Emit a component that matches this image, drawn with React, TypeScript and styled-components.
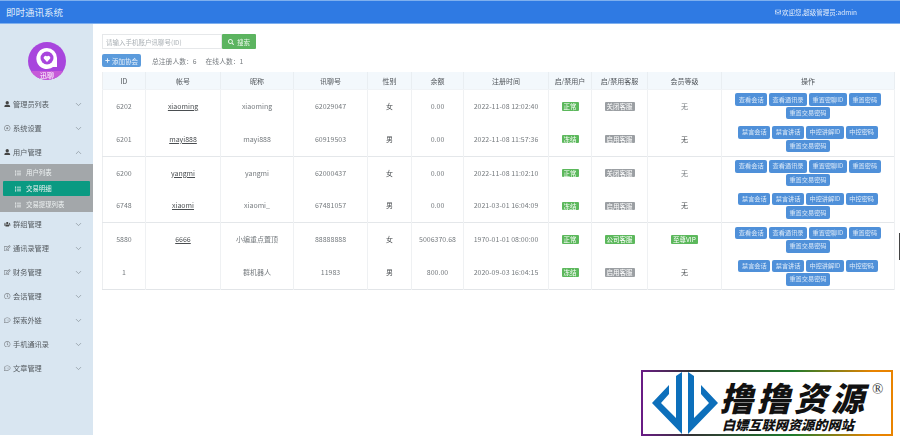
import React from "react";
import styled, { createGlobalStyle } from "styled-components";
import { ChevronDown, ChevronUp } from "lucide-react";
import { FaUser, FaUsers, FaRegEdit, FaRegClock, FaRegCommentDots, FaRegDotCircle, FaList, FaSearch, FaPlus, FaRegEnvelope } from "react-icons/fa";

const Global = createGlobalStyle`
  html, body { margin: 0; padding: 0; background: #fff; overflow: hidden; }
  body { font-family: "Noto Sans CJK SC", "Liberation Sans", sans-serif; }
`;
const Page = styled.div`
  width: 900px; height: 436px; display: flex; flex-direction: column;
  filter: blur(0.5px);
`;
const Header = styled.header`
  height: 24px; flex: none; box-sizing: border-box; background: #2f7ae3;
  border-top: 1px solid #7fb0ee; border-bottom: 1px solid #7fb0ee;
  display: flex; align-items: center; justify-content: space-between;
  padding: 0 43px 1px 6px; color: #dfeafa;
`;
const Brand = styled.div` font-size: 9.5px; `;
const Welcome = styled.div` font-size: 6.5px; display: flex; align-items: center; gap: 1px; `;
const Body = styled.div` flex: 1; display: flex; min-height: 0; `;
const Side = styled.aside`
  width: 93px; flex: none; height: 411px; background: #d9e6f1; display: flex; flex-direction: column;
`;
const LogoWrap = styled.div` height: 68px; flex: none; display: flex; justify-content: center; padding-top: 18px; box-sizing: border-box; `;
const MenuItem = styled.div<{ $dark?: boolean }>`
  height: 24px; display: flex; align-items: center; padding: 0 10px 0 4px; font-size: 7.2px; color: #555b60; gap: 2.5px;
  svg.ico { width: 6.5px; height: 6.5px; flex: none; color: ${(p) => (p.$dark ? "#444" : "#80868c")}; }
  svg.chev { width: 9px; height: 9px; margin-left: auto; color: #8c979f; }
`;
const SubMenu = styled.div` background: #a3a7aa; height: 48px; flex: none; display: flex; flex-direction: column; padding-top: 1px; box-sizing: border-box; `;
const SubItem = styled.div<{ $active?: boolean }>`
  height: 15px; margin: ${(p) => (p.$active ? "1px 3px" : "0 3px")}; flex: none; display: flex; align-items: center; gap: 5px; padding-left: 12px;
  font-size: 6.4px; color: #eef2f2; border-radius: 1px;
  background: ${(p) => (p.$active ? "#0a9a82" : "transparent")};
  svg { width: 6px; height: 6px; }
`;
const Main = styled.main` flex: 1; padding: 10px 6px 0 9px; min-width: 0; `;
const SearchRow = styled.div` display: flex; height: 15px; `;
const SearchInput = styled.div`
  width: 120px; box-sizing: border-box; border: 1px solid #e6e8ea; font-size: 6.5px; color: #aab0b5; display: flex; align-items: center; padding-left: 3px;
`;
const SearchBtn = styled.div`
  width: 34px; background: #5cb460; color: #eaf7ea; font-size: 6.5px; display: flex; align-items: center; justify-content: center; gap: 3px; border-radius: 1px;
  svg { width: 6px; height: 6px; }
`;
const StatRow = styled.div` display: flex; align-items: center; height: 13px; margin-top: 5px; font-size: 6.8px; color: #777c80; `;
const AddBtn = styled.div`
  width: 39px; height: 13px; background: #5b9bdc; color: #e6f0fb; font-size: 6.5px; display: flex; align-items: center; justify-content: center; gap: 2px; border-radius: 2px; margin-right: 11px;
  svg { width: 5px; height: 5px; }
`;
const Stat = styled.span` margin-right: 9px; `;
const Table = styled.table`
  margin-top: 5px; width: 792px; border-collapse: collapse; table-layout: fixed; font-size: 7px; color: #767b7f;
  border-bottom: 1px solid #e2e5e8; border-left: 1px solid #eceef0; border-right: 1px solid #eceef0;
`;
const Th = styled.th`
  height: 17px; padding: 0; background: #f3f8fc; color: #50555a; font-weight: 400; font-size: 7px; border-right: 1px solid #e9eef2; border-bottom: 1px solid #f0f3f6;
`;
const Tr = styled.tr<{ $sep?: boolean }>`
  height: 33.33px;
  border-bottom: ${(p) => (p.$sep ? "1px solid #e4e7ea" : "none")};
`;
const Td = styled.td<{ $link?: boolean; $dark?: boolean }>`
  padding: 0; text-align: center; border-right: 1px solid #eff1f3; line-height: 1;
  text-decoration: ${(p) => (p.$link ? "underline" : "none")};
  color: ${(p) => (p.$dark ? "#4a4e51" : "inherit")};
`;
const Tag = styled.span<{ $green?: boolean }>`
  display: inline-block; padding: 1px 2px; font-size: 6.5px; line-height: 6.5px; border-radius: 1px; color: #fff; white-space: nowrap;
  background: ${(p) => (p.$green ? "#5cb85c" : "#9b9fa3")};
`;
const Ops = styled.div` display: flex; flex-wrap: wrap; justify-content: center; gap: 1px 2px; padding: 0 3px; `;
const OpBtn = styled.span`
  height: 12.5px; background: #4f90d9; color: #dce9f8; font-size: 6.2px; border-radius: 2px; padding: 0 3.5px; display: flex; align-items: center; white-space: nowrap;
`;
const Edge = styled.div` position: absolute; left: 899px; top: 233px; width: 1px; height: 27px; background: #444; `;
const Mark = styled.div`
  position: absolute; left: 641px; top: 370px; width: 252px; height: 66px; box-sizing: border-box; padding: 2px;
  background: linear-gradient(90deg, #6a1b86 0%, #333 20%, #1c7a2c 60%, #e98300 92%);
  z-index: 2;
`;
const MarkInner = styled.div` background: #fff; height: 100%; display: flex; position: relative; align-items: center; padding-left: 9px; `;
const MarkText = styled.div` margin-left: 2px; align-self: flex-start; padding-top: 9px; display: flex; flex-direction: column; align-items: flex-start; font-family: "Noto Sans CJK SC", sans-serif; font-style: italic; font-weight: 900; color: #111; `;
const MarkTitle = styled.div` font-size: 33px; line-height: 33px; letter-spacing: 4px; `;
const MarkSub = styled.div` font-size: 13.2px; line-height: 15px; margin: 3px 0 0 2px; `;
const Reg = styled.span` position: absolute; left: 229px; top: 9px; font-size: 15px; color: #333; font-family: "Liberation Serif", serif; `;

const cols = [43, 75, 73, 74, 44, 52, 85, 43, 56, 74, 173];
const heads = ["ID", "帐号", "昵称", "讯聊号", "性别", "余额", "注册时间", "启/禁用户", "启/禁用客服", "会员等级", "操作"];
const opsA = ["查看会话", "查看通讯录", "重置密聊ID", "重置密码", "重置交易密码"];
const opsB = ["禁言会话", "禁言讲话", "中控讲解ID", "中控密码", "重置交易密码"];
const rows = [
  { id: "6202", acc: "xiaoming", nick: "xiaoming", no: "62029047", sex: "女", money: "0.00", time: "2022-11-08 12:02:40", st: "正常", stG: true, kf: "关闭客服", lv: "无", a: true },
  { id: "6201", acc: "mayi888", nick: "mayi888", no: "60919503", sex: "男", money: "0.00", time: "2022-11-08 11:57:36", st: "冻结", stG: true, kf: "启用客服", lv: "无", sep: true },
  { id: "6200", acc: "yangmi", nick: "yangmi", no: "62000437", sex: "女", money: "0.00", time: "2022-11-08 11:02:10", st: "正常", stG: true, kf: "关闭客服", lv: "无", a: true },
  { id: "6748", acc: "xiaomi", nick: "xiaomi_", no: "67481057", sex: "男", money: "0.00", time: "2021-03-01 16:04:09", st: "冻结", stG: true, kf: "启用客服", lv: "无", sep: true },
  { id: "5880", acc: "6666", nick: "小编重点置顶", no: "88888888", sex: "女", money: "5006370.68", time: "1970-01-01 08:00:00", st: "正常", stG: true, kf: "公司客服", kfG: true, lv: "至尊VIP", lvG: true, a: true },
  { id: "1", acc: "", nick: "群机器人", no: "11983", sex: "男", money: "800.00", time: "2020-09-03 16:04:15", st: "冻结", stG: true, kf: "启用客服", lv: "无" },
];

function Logo() {
  return (
    <svg width="38" height="38" viewBox="0 0 38 38">
      <defs><clipPath id="c"><circle cx="19" cy="19" r="19" /></clipPath></defs>
      <circle cx="19" cy="19" r="19" fill="#a845dd" />
      <rect x="0" y="29" width="38" height="9" fill="#c65ad8" clipPath="url(#c)" />
      <path d="M19 6a10.5 10.5 0 1 0 6 19h4V16A10 10 0 0 0 19 6z" fill="#fff" />
      <circle cx="19" cy="16" r="6.5" fill="#a845dd" />
      <path d="M19 20l-3.2-3.4a2 2 0 0 1 3.2-2.2 2 2 0 0 1 3.2 2.2z" fill="#fff" />
      <text x="19" y="36" fontSize="7" fill="#fff" textAnchor="middle" fontFamily="Noto Sans CJK SC">迅聊</text>
    </svg>
  );
}
function Diamond() {
  return (
    <svg width="66" height="62" viewBox="0 0 66 62" style={{ flex: "none" }}>
      <path d="M30 0v62L0 31 17 13v9L9 31l15 15V4z" fill="#0d6fbb" />
      <path d="M36 0v62l30-31L49 13v9l8 9-15 15V4z" fill="#0d6fbb" />
    </svg>
  );
}

const menuTop = [
  { t: "管理员列表", I: FaUser, d: true },
  { t: "系统设置", I: FaRegDotCircle },
  { t: "用户管理", I: FaUser, d: true, open: true },
];
const menuBottom = [
  { t: "群组管理", I: FaUsers, d: true },
  { t: "通讯录管理", I: FaRegEdit },
  { t: "财务管理", I: FaRegEdit },
  { t: "会话管理", I: FaRegClock },
  { t: "探索外链", I: FaRegCommentDots },
  { t: "手机通讯录", I: FaRegClock },
  { t: "文章管理", I: FaRegCommentDots },
];

export default function App() {
  const item = (m: any) => (
    <MenuItem key={m.t} $dark={m.d}>
      <m.I className="ico" />
      <span>{m.t}</span>
      {m.open ? <ChevronUp className="chev" /> : <ChevronDown className="chev" />}
    </MenuItem>
  );
  return (
    <>
      <Global />
      <Page>
        <Header>
          <Brand>即时通讯系统</Brand>
          <Welcome><FaRegEnvelope size={6} />欢迎您,超级管理员:admin</Welcome>
        </Header>
        <Body>
          <Side>
            <LogoWrap><Logo /></LogoWrap>
            {menuTop.map(item)}
            <SubMenu>
              <SubItem><FaList />用户列表</SubItem>
              <SubItem $active><FaList />交易明细</SubItem>
              <SubItem><FaList />交易提现列表</SubItem>
            </SubMenu>
            {menuBottom.map(item)}
          </Side>
          <Main>
            <SearchRow>
              <SearchInput>请输入手机账户讯聊号(ID)</SearchInput>
              <SearchBtn><FaSearch />搜索</SearchBtn>
            </SearchRow>
            <StatRow>
              <AddBtn><FaPlus />添加协会</AddBtn>
              <Stat>总注册人数：6</Stat>
              <Stat>在线人数：1</Stat>
            </StatRow>
            <Table>
              <colgroup>{cols.map((w, i) => <col key={i} style={{ width: w }} />)}</colgroup>
              <thead><tr>{heads.map((h) => <Th key={h}>{h}</Th>)}</tr></thead>
              <tbody>
                {rows.map((r) => (
                  <Tr key={r.id} $sep={r.sep}>
                    <Td>{r.id}</Td>
                    <Td $link $dark>{r.acc}</Td>
                    <Td>{r.nick}</Td>
                    <Td>{r.no}</Td>
                    <Td $dark>{r.sex}</Td>
                    <Td>{r.money}</Td>
                    <Td>{r.time}</Td>
                    <Td><Tag $green={r.stG}>{r.st}</Tag></Td>
                    <Td><Tag $green={r.kfG}>{r.kf}</Tag></Td>
                    <Td $dark={!r.a}>{r.lvG ? <Tag $green>{r.lv}</Tag> : r.lv}</Td>
                    <Td><Ops>{(r.a ? opsA : opsB).map((o) => <OpBtn key={o}>{o}</OpBtn>)}</Ops></Td>
                  </Tr>
                ))}
              </tbody>
            </Table>
          </Main>
        </Body>
      </Page>
      <Edge />
      <Mark>
        <MarkInner>
          <Diamond />
          <MarkText>
            <MarkTitle>撸撸资源</MarkTitle>
            <MarkSub>白嫖互联网资源的网站</MarkSub>
          </MarkText>
          <Reg>®</Reg>
        </MarkInner>
      </Mark>
    </>
  );
}
